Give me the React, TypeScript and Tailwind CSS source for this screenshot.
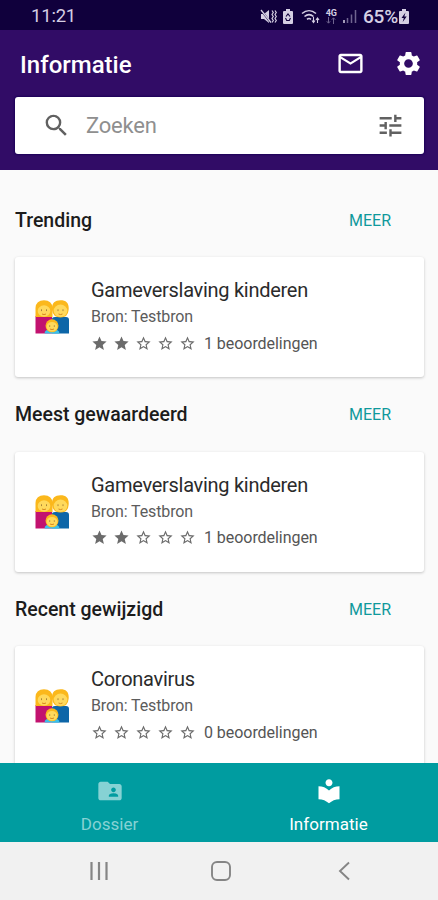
import React from "react";
import {
  MdFolderShared,
  MdLocalLibrary,
  MdMailOutline,
  MdSearch,
  MdSettings,
  MdStar,
  MdStarBorder,
  MdTune,
} from "react-icons/md";

interface Article {
  title: string;
  source: string;
  rating: number;
  reviews: number;
}

interface Section {
  heading: string;
  article: Article;
}

const sections: Section[] = [
  {
    heading: "Trending",
    article: {
      title: "Gameverslaving kinderen",
      source: "Testbron",
      rating: 2,
      reviews: 1,
    },
  },
  {
    heading: "Meest gewaardeerd",
    article: {
      title: "Gameverslaving kinderen",
      source: "Testbron",
      rating: 2,
      reviews: 1,
    },
  },
  {
    heading: "Recent gewijzigd",
    article: {
      title: "Coronavirus",
      source: "Testbron",
      rating: 0,
      reviews: 0,
    },
  },
];

const BatteryGlyph = ({ children }: { children: React.ReactNode }) => (
  <svg width="12" height="15" viewBox="0 0 12 15">
    <path d="M4 0h4v2h2a1 1 0 0 1 1 1v11a1 1 0 0 1-1 1H2a1 1 0 0 1-1-1V3a1 1 0 0 1 1-1h2z" fill="#d5cfe3" />
    {children}
  </svg>
);

const StatusBar = () => (
  <div className="flex h-[30px] shrink-0 items-center bg-[#10003c] pl-[31px] pr-[28px] pt-0.5 text-[#d5cfe3]">
    <span className="text-[18.5px] leading-none tracking-[-0.2px]">11:21</span>
    <div className="ml-auto flex items-center">
      {/* muted, vibrating */}
      <svg width="17" height="15" viewBox="0 0 17 15" className="mr-[5px]">
        <path d="M1 5h3l5-4v13l-5-4H1z" fill="#d5cfe3" />
        <path d="M1 1l10 13" stroke="#10003c" strokeWidth="2" />
        <path d="M1 1l10 12.5" stroke="#d5cfe3" strokeWidth="1.3" />
        <path d="M12 1.5l1.3 2-1.3 2 1.3 2-1.3 2 1.3 2-1.3 2M15 1.5l1.3 2-1.3 2 1.3 2-1.3 2 1.3 2-1.3 2" stroke="#d5cfe3" strokeWidth="1.2" fill="none" />
      </svg>
      <div className="mr-[7px]">
        <BatteryGlyph>
          <path d="M4 7.5L6 5l2 2.5M3.5 9L4.7 11.500h2.600L8.500 9" stroke="#10003c" strokeWidth="1.1" fill="none" />
        </BatteryGlyph>
      </div>
      <svg width="19" height="15" viewBox="0 0 19 15" className="mr-[6px]">
        <path d="M1 4.5c4.3-3.7 9.7-3.7 14 0M3.5 7.5c2.8-2.3 6.2-2.3 9 0M6 10.3c1.3-1 2.7-1 4 0" stroke="#d5cfe3" strokeWidth="1.6" fill="none" />
        <path d="M12.5 8v5M11 11.5l1.5 2 1.5-2M16.5 14V9.5M15 11l1.5-2 1.5 2" stroke="#d5cfe3" strokeWidth="1.1" fill="none" />
      </svg>
      <div className="mr-[6px] flex flex-col items-center">
        <span className="text-[9px] font-bold leading-[8px]">4G</span>
        <svg width="10" height="7" viewBox="0 0 10 7">
          <path d="M2.5 0v6M.8 4.3L2.5 6.2l1.7-1.9M7.5 7V1M5.8 2.7L7.5.8l1.7 1.9" stroke="#6f648f" fill="none" />
        </svg>
      </div>
      <svg width="14" height="13" viewBox="0 0 14 13" className="mr-[6px]">
        <path d="M1 10v3" stroke="#d5cfe3" strokeWidth="1.5" />
        <path d="M4.5 8v5M8.5 4.5V13M12.5 0v13" stroke="#6f648f" strokeWidth="1.5" />
      </svg>
      <span className="text-[19px] font-medium leading-none tracking-[-0.2px]">65%</span>
      <BatteryGlyph>
        <path d="M7.5 3.5L3.5 9h2.3L4.7 13l4-5.5H6.3z" fill="#10003c" />
      </BatteryGlyph>
    </div>
  </div>
);

const FamilyIcon = () => (
  <svg width="34" height="34" viewBox="0 0 34 34">
    {/* parents */}
    <path d="M.5 33.500V16h16.500v17.500z" fill="#c2126f" />
    <path d="M17 33.500V19q0-2 3-2h11q3 0 3 3v13.500z" fill="#0d66a8" />
    <path d="M.5 17V8Q1 .3 9 .3T17.500 8v9z" fill="#fbb81c" />
    <path d="M17 10C16.500 3.500 19.500.3 25.500.3S34.300 3.500 33.600 10q-.6 7.500-8.100 7.500T17 10z" fill="#fbb81c" />
    <ellipse cx="9" cy="11" rx="6.300" ry="5.800" fill="#ffd95c" />
    <ellipse cx="25.500" cy="10.800" rx="6.800" ry="6.200" fill="#ffd95c" />
    <path d="M6.500 9.300v1.800M11.500 9.300v1.800M23 9.300v1.800M28 9.300v1.800" stroke="#a9843a" />
    <path d="M7 14q2 1.200 4 0M23.500 14q2 1.200 4 0" stroke="#d78a20" fill="none" />
    {/* child */}
    <path d="M9.500 33.500q0-4.500 7.500-4.500t7.500 4.500z" fill="#3bc0ea" />
    <circle cx="17" cy="25.800" r="6.500" fill="#fbb81c" />
    <ellipse cx="17" cy="26.800" rx="5.500" ry="4.800" fill="#ffd95c" />
    <path d="M14.700 25.300v1.500M19.300 25.300v1.500" stroke="#a9843a" />
    <path d="M15 29q2 1.200 4 0" stroke="#d78a20" fill="none" />
  </svg>
);

const Rating = ({ value }: { value: number }) => (
  <div className="flex gap-[5px] text-[#6b6b6b]">
    {[1, 2, 3, 4, 5].map((n) =>
      n <= value ? <MdStar key={n} size={17} /> : <MdStarBorder key={n} size={17} />
    )}
  </div>
);

const ArticleCard = ({ article }: { article: Article }) => (
  <div className="flex h-[120px] items-center rounded-[3px] bg-white pl-5 shadow-[0_1px_3px_rgba(0,0,0,0.22)]">
    <FamilyIcon />
    <div className="mb-px ml-[22px] flex flex-col">
      <h3 className="text-[20px] leading-7 tracking-[-0.28px] text-[#2b2b2b]">{article.title}</h3>
      <p className="text-[16px] leading-[25px] tracking-[-0.12px] text-[#5c5c5c]">Bron: {article.source}</p>
      <div className="flex h-7 items-center gap-2">
        <Rating value={article.rating} />
        <span className="pt-px text-[16px] tracking-[-0.05px] text-[#555]">{article.reviews} beoordelingen</span>
      </div>
    </div>
  </div>
);

const App: React.FC = () => {
  return (
    <div className="flex h-[900px] w-[438px] flex-col overflow-hidden bg-[#fafafa] font-['Roboto','Noto_Sans',sans-serif]">
      <StatusBar />

      <header className="flex h-[140px] shrink-0 flex-col bg-[#310c66] pl-[15px] pr-[14px]">
        <div className="flex h-[67px] items-center pl-[5px] text-white">
          <h1 className="pt-0.5 text-[24px] font-medium">Informatie</h1>
          <MdMailOutline size={29} className="ml-auto" />
          <MdSettings size={29} className="ml-[29px] mr-px" />
        </div>
        <div className="flex h-[57px] items-center rounded-[3px] bg-white pl-[27px] pr-[19px] shadow-[0_0_2px_1px_#1c0058]">
          <MdSearch size={29} className="text-[#616161]" />
          <span className="ml-[15px] text-[22px] tracking-[-0.2px] text-[#8f8f8f]">Zoeken</span>
          <MdTune size={29} className="ml-auto text-[#616161]" />
        </div>
      </header>

      <main className="min-h-0 flex-1 overflow-hidden pl-[15px] pr-[14px] pt-[13px]">
        {sections.map(({ heading, article }) => (
          <section key={heading} className="h-[194.5px]">
            <div className="flex h-[74px] items-center justify-between pr-[33px] pt-px">
              <h2 className="text-[19.5px] font-medium text-[#1c1c1c]">{heading}</h2>
              <button className="text-[16px] text-[#0f999c]">MEER</button>
            </div>
            <ArticleCard article={article} />
          </section>
        ))}
      </main>

      <nav className="flex h-[79px] shrink-0 bg-[#009ca0]">
        <div className="flex flex-1 flex-col items-center gap-[3px] pt-[14px] text-[#86d2d4]">
          <MdFolderShared size={28} />
          <span className="text-[17px] leading-8">Dossier</span>
        </div>
        <div className="flex flex-1 flex-col items-center gap-[3px] pt-[14px] text-white">
          <MdLocalLibrary size={28} />
          <span className="text-[17px] leading-8 tracking-[0.05px]">Informatie</span>
        </div>
      </nav>

      <div className="flex h-[58px] shrink-0 items-center bg-[#f1f1f1] pl-[89px] text-[#858585]">
        <svg width="20" height="20" viewBox="0 0 20 20">
          <path d="M2.5 1v18M10 1v18M17.5 1v18" stroke="currentColor" strokeWidth="2.2" />
        </svg>
        <svg width="20" height="20" viewBox="0 0 20 20" className="ml-[102px]">
          <rect x="1" y="1" width="18" height="18" rx="5" stroke="currentColor" strokeWidth="1.9" fill="none" />
        </svg>
        <svg width="12" height="20" viewBox="0 0 12 20" className="ml-[107px]">
          <path d="M11 1.5L2 10l9 8.5" stroke="currentColor" strokeWidth="1.9" fill="none" />
        </svg>
      </div>
    </div>
  );
};

export default App;
